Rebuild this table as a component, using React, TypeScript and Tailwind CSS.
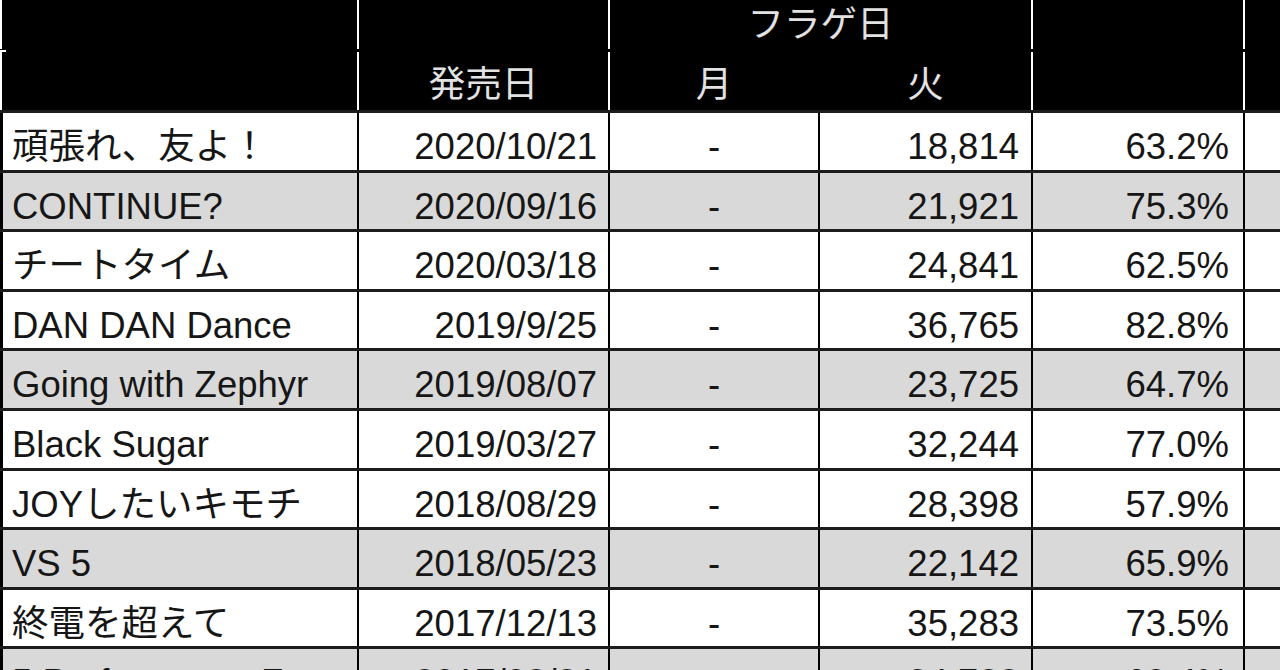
import React from 'react';

interface Row {
  title: string;
  date: string;
  mon: string;
  tue: string;
  rate: string;
  gray?: boolean;
}

const rows: Row[] = [
  { title: '頑張れ、友よ！', date: '2020/10/21', mon: '-', tue: '18,814', rate: '63.2%' },
  { title: 'CONTINUE?', date: '2020/09/16', mon: '-', tue: '21,921', rate: '75.3%', gray: true },
  { title: 'チートタイム', date: '2020/03/18', mon: '-', tue: '24,841', rate: '62.5%' },
  { title: 'DAN DAN Dance', date: '2019/9/25', mon: '-', tue: '36,765', rate: '82.8%' },
  { title: 'Going with Zephyr', date: '2019/08/07', mon: '-', tue: '23,725', rate: '64.7%', gray: true },
  { title: 'Black Sugar', date: '2019/03/27', mon: '-', tue: '32,244', rate: '77.0%' },
  { title: 'JOYしたいキモチ', date: '2018/08/29', mon: '-', tue: '28,398', rate: '57.9%' },
  { title: 'VS 5', date: '2018/05/23', mon: '-', tue: '22,142', rate: '65.9%', gray: true },
  { title: '終電を超えて', date: '2017/12/13', mon: '-', tue: '35,283', rate: '73.5%' },
  { title: '5 Performance Z', date: '2017/08/21', mon: '', tue: '24,783', rate: '60.4%', gray: true },
];

function DataRow({ row }: { row: Row }) {
  const bg = row.gray ? 'bg-[#d9d9d9]' : 'bg-white';
  return (
    <div className={`flex h-[59.6px] shrink-0 border-t-[3px] border-[#1c1c1c] ${bg}`}>
      <div className="flex w-[357px] items-center border-l-[3px] border-black pt-3 pl-[9px]">{row.title}</div>
      <div className="flex w-[251px] items-center justify-end border-l-2 border-black pt-3 pr-[11px]">{row.date}</div>
      <div className="flex w-[210px] items-center justify-center border-l-2 border-black pt-3">{row.mon}</div>
      <div className="flex w-[213px] items-center justify-end border-l-2 border-black pt-3 pr-3">{row.tue}</div>
      <div className="flex w-[212px] items-center justify-end border-l-2 border-black pt-3 pr-[14px]">{row.rate}</div>
      <div className="w-[37px] border-l-2 border-black" />
    </div>
  );
}

export default function App() {
  return (
    <div className="flex h-[670px] w-[1280px] flex-col overflow-hidden bg-white font-['Liberation_Sans','Noto_Sans_CJK_JP',sans-serif] text-[36.5px] leading-none text-[#161616]">
      {/* header */}
      <div className="flex h-[110px] shrink-0 flex-col bg-black text-[#e2e2e2]">
        <div className="flex h-[49px]">
          <div className="w-[357px] border-l-2 border-white" />
          <div className="w-[251px] border-l-2 border-white" />
          <div className="flex w-[423px] items-center justify-center border-l-2 border-white pt-[2px]">フラゲ日</div>
          <div className="w-[212px] border-l-2 border-white" />
          <div className="w-[37px] border-l-2 border-white" />
        </div>
        <div className="flex h-[3px] items-center">
          <div className="h-[2px] w-[6px] bg-white" />
        </div>
        <div className="flex flex-1">
          <div className="w-[357px] border-l-2 border-white" />
          <div className="flex w-[251px] items-center justify-center border-l-2 border-white pt-2">発売日</div>
          <div className="flex w-[210px] items-center justify-center border-l-2 border-white pt-2">月</div>
          <div className="flex w-[213px] items-center justify-center border-l-2 border-black pt-2">火</div>
          <div className="w-[212px] border-l-2 border-white" />
          <div className="w-[37px] border-l-2 border-white" />
        </div>
      </div>

      {/* body */}
      {rows.map((r) => (
        <DataRow key={r.title} row={r} />
      ))}
    </div>
  );
}
